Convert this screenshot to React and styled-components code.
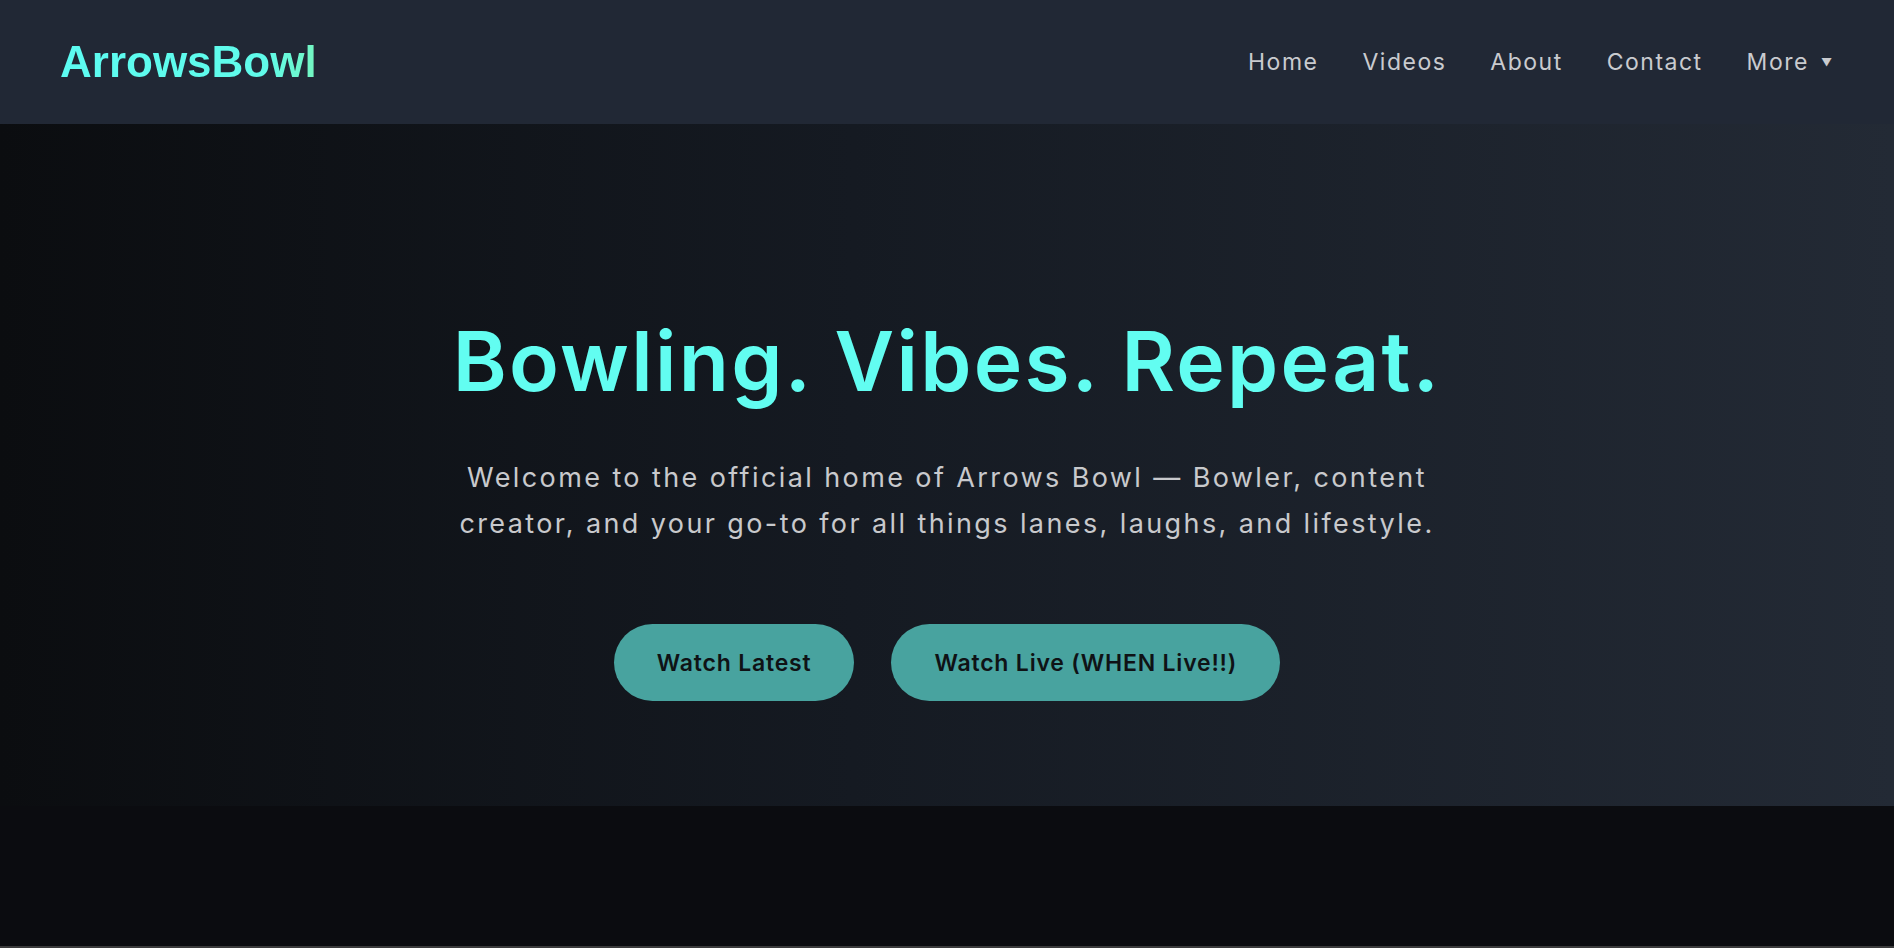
import React from "react";
import styled, { createGlobalStyle } from "styled-components";

const GlobalStyle = createGlobalStyle`
  * {
    box-sizing: border-box;
  }
  html, body {
    margin: 0;
    padding: 0;
    background: #0b0c10;
    font-family: Inter, "Noto Sans", sans-serif;
  }
`;

const links = ["Home", "Videos", "About", "Contact"];

const App = () => {
  return (
    <Page>
      <GlobalStyle />
      <Header>
        <Logo>ArrowsBowl</Logo>
        <Nav>
          {links.map((l) => (
            <NavLink key={l}>{l}</NavLink>
          ))}
          <NavLink>
            More <Caret>▼</Caret>
          </NavLink>
        </Nav>
      </Header>

      <Hero>
        <Title>Bowling. Vibes. Repeat.</Title>
        <Lead>
          Welcome to the official home of Arrows Bowl — Bowler, content
          <br />
          creator, and your go-to for all things lanes, laughs, and lifestyle.
        </Lead>
        <Buttons>
          <Button>Watch Latest</Button>
          <Button>Watch Live (WHEN Live!!)</Button>
        </Buttons>
      </Hero>

      <Below />
      <BottomEdge />
    </Page>
  );
};
export default App;

const Page = styled.div`
  display: flex;
  flex-direction: column;
  min-height: 948px;
  background: #0b0c10;
`;

const Header = styled.header`
  display: flex;
  flex-direction: row;
  justify-content: space-between;
  align-items: center;
  height: 124px;
  padding: 0 62px 0 60px;
  background: #212835;
`;

const Logo = styled.div`
  font-family: "Liberation Sans", Arial, sans-serif;
  font-weight: 700;
  font-size: 44px;
  background: linear-gradient(90deg, #5cfcf2 0%, #60fbea 80%, #74f6c0 100%);
  -webkit-background-clip: text;
  background-clip: text;
  color: transparent;
`;

const Nav = styled.nav`
  display: flex;
  flex-direction: row;
  align-items: center;
  gap: 44px;
`;

const NavLink = styled.a`
  display: flex;
  align-items: center;
  color: #c9cbcf;
  font-size: 23px;
  letter-spacing: 1.5px;
  cursor: pointer;
`;

const Caret = styled.span`
  font-size: 11px;
  margin-left: 12px;
  letter-spacing: 0;
`;

const Hero = styled.section`
  display: flex;
  flex-direction: column;
  align-items: center;
  height: 682px;
  padding-top: 189px;
  background: linear-gradient(90deg, #0b0d10 0%, #151a22 45%, #232a35 100%);
`;

const Title = styled.h1`
  margin: 0;
  font-size: 82px;
  line-height: 1.2;
  font-weight: 600;
  letter-spacing: 2.3px;
  color: #62fdf1;
`;

const Lead = styled.p`
  margin: 44px 0 0;
  font-size: 27px;
  line-height: 46px;
  letter-spacing: 2.4px;
  text-align: center;
  color: #c8c9cc;
`;

const Buttons = styled.div`
  display: flex;
  flex-direction: row;
  gap: 37px;
  margin-top: 77px;
`;

const Button = styled.button`
  height: 77px;
  padding: 0 43px;
  border: none;
  border-radius: 40px;
  background: #48a39f;
  color: #0f1215;
  font-family: Inter, "Noto Sans", sans-serif;
  font-size: 23px;
  font-weight: 600;
  letter-spacing: 0.8px;
  cursor: pointer;
`;

const Below = styled.div`
  height: 140px;
  background: #0b0c10;
`;

const BottomEdge = styled.div`
  height: 2px;
  background: #3b3b3c;
`;
